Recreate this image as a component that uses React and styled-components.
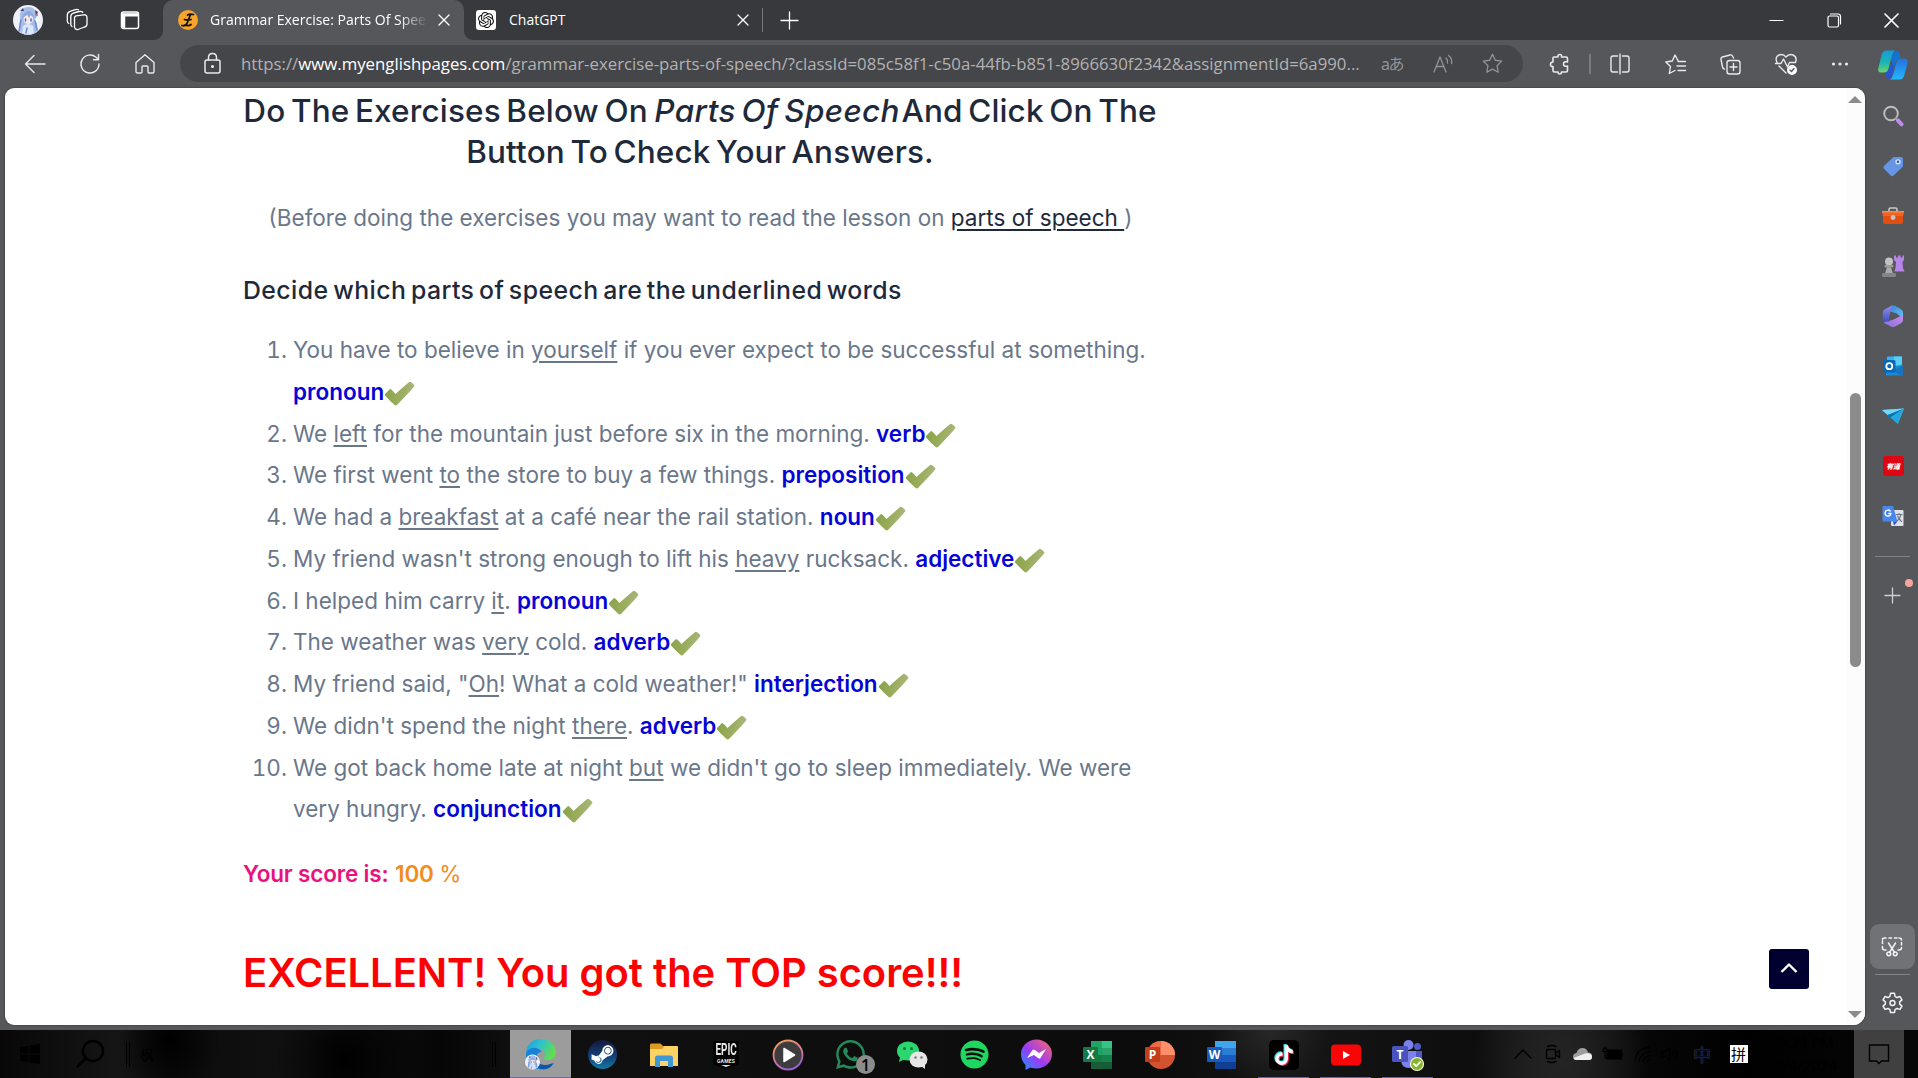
import React from "react";
import styled, { createGlobalStyle } from "styled-components";
import { FaSteamSymbol, FaWhatsapp, FaSpotify, FaTiktok } from "react-icons/fa6";
import { SiOpenai } from "react-icons/si";

const Global = createGlobalStyle`
  * { box-sizing: border-box; }
  html, body { margin: 0; padding: 0; overflow: hidden; background: #56575b; }
  body { font-family: "Open Sans", "Noto Sans", "Noto Sans CJK SC", sans-serif; }
`;

const Screen = styled.div`
  width: 1918px; height: 1078px; display: flex; flex-direction: column;
  background: #56575b; overflow: hidden;
`;

/* ---------- tab strip ---------- */
const TabStrip = styled.header`
  height: 40px; flex: none; display: flex; align-items: stretch; background: #38393c; color: #fff;
`;
const Corner = styled.div`
  width: 163px; display: flex; align-items: center; padding-left: 13px; gap: 23px;
  background: #38393c; border-bottom-right-radius: 9px;
  svg:last-child { margin-left: 9px; }
`;
const CornerWrap = styled.div`background: #56575b; display: flex;`;
const Tab = styled.div`
  width: ${p => p.$w}px; display: flex; align-items: center; padding-left: ${p => p.$pad}px;
  background: ${p => (p.$active ? "#56575b" : "#38393c")};
  border-radius: ${p => (p.$active ? "10px 10px 0 0" : "0 0 0 9px")};
  font-size: 14px; line-height: 20px;
`;
const TabBack = styled.div`display: flex; background: ${p => p.$bg};`;
const TabTitle = styled.div`
  width: ${p => p.$w}px; margin-left: ${p => p.$gap}px; white-space: nowrap; overflow: hidden; color: #fff;
  ${p => p.$fade && "-webkit-mask-image: linear-gradient(90deg,#000 86%,transparent 99%); mask-image: linear-gradient(90deg,#000 86%,transparent 99%);"}
`;
const CloseWrap = styled.div`margin-left: ${p => p.$ml}px; display: flex;`;
const Favicon = styled.div`
  width: 20px; height: 20px; flex: none; display: grid; place-items: center;
  background: #fff; color: #111; border-radius: 3px;
`;
const TabDivider = styled.div`width: 1px; height: 24px; background: #77787b; align-self: center; margin-left: 11px;`;
const NewTab = styled.div`display: grid; place-items: center; margin-left: 18px;`;
const WindowButtons = styled.div`
  margin-left: auto; display: grid; grid-template-columns: repeat(3, 57.5px); place-items: center; width: 172px; margin-right: -2px;
`;

/* ---------- toolbar ---------- */
const Toolbar = styled.div`
  height: 48px; flex: none; display: flex; align-items: center; padding: 0 0 0 7px; color: #e9e9ea;
`;
const NavButtons = styled.div`display: grid; grid-template-columns: repeat(3, 55px); place-items: center; width: 173px; flex: none;`;
const AddressBar = styled.div`
  width: 1343px; flex: none; height: 37px; border-radius: 19px; background: #454649; display: flex; align-items: center;
  padding: 0 20px 0 22px; color: #b2b2b4; margin-top: -1px;
`;
const Url = styled.div`
  margin-left: 18px; width: 1123px; font-size: 16.8px; line-height: 24px; white-space: nowrap;
`;
const Host = styled.span`color: #fff;`;
const AddressActions = styled.div`
  margin-left: auto; width: 122px; display: flex; align-items: center; justify-content: space-between; color: #929395;
`;
const Translate = styled.span`
  font: 16px/20px "Noto Sans", "Noto Sans CJK JP", sans-serif; letter-spacing: -1.5px; white-space: nowrap; width: 22px;
`;
const ToolbarActions = styled.div`display: flex; align-items: center; flex: none; padding-left: 25px;`;
const Action = styled.div`width: ${p => p.$w || 55}px; height: 28px; display: grid; place-items: center;`;
const ToolDivider = styled.div`width: 2px; height: 20px; background: #7a7b7e; margin: 0 1px 0 17px;`;

/* ---------- main ---------- */
const Main = styled.div`height: 942px; flex: none; display: flex;`;
const Page = styled.main`
  width: 1860px; height: 937px; margin-left: 5px; background: #fff; border-radius: 9px 10px 12px 9px;
  display: flex; overflow: hidden; box-shadow: 0 0 2px rgba(0,0,0,.5);
`;
const Article = styled.article`
  width: 914px; margin-left: 238px; padding-top: 2px; flex: none;
  font-family: Inter, "Liberation Sans", sans-serif; font-optical-sizing: none; color: #6a778b;
  font-size: 22.5px; line-height: 41.76px;
`;
const Title = styled.h2`
  margin: 0; font-size: 31.5px; line-height: 41.4px; font-weight: 500; letter-spacing: .15px; word-spacing: -3px;
  color: #1e293b; text-align: center; white-space: nowrap;
  em { letter-spacing: .35px; margin: 0 -4px 0 1px; }
`;
const Intro = styled.p`margin: 24.5px 0 0; text-align: center; white-space: nowrap; padding-left: 1px;`;
const LessonLink = styled.a`color: #1e293b; text-decoration: underline; text-decoration-thickness: 2px; text-underline-offset: 3px; white-space: pre;`;
const Subtitle = styled.h3`
  margin: 35px 0 0; font-size: 24.8px; line-height: 32px; font-weight: 500; letter-spacing: .45px; word-spacing: -2.5px;
  color: #1e293b; white-space: nowrap;
`;
const Questions = styled.ol`
  margin: 23px 0 0; padding: 0 0 0 50px;
  u { text-decoration-thickness: 2px; text-underline-offset: 3px; }
`;
const Question = styled.li`height: ${p => p.$lines * 41.76}px; white-space: nowrap;`;
const Answer = styled.b`font-weight: 600; color: #0404d6;`;
const CheckMark = styled.svg`width: 31px; height: 25px; vertical-align: -6px;`;
const Score = styled.p`
  margin: 23px 0 0; font-weight: 600; color: #e8127f; letter-spacing: -.17px; white-space: nowrap;
`;
const ScoreValue = styled.span`color: #f28c1c; margin-left: 1px;`;
const Percent = styled.span`font-weight: 400;`;
const Verdict = styled.h1`
  margin: 49.5px 0 0; font-size: 39.9px; line-height: 58px; font-weight: 600; color: #fb0202; white-space: nowrap;
`;
const ScrollTop = styled.div`
  width: 40px; height: 40px; margin: auto 37px 36px auto; border-radius: 3px; background: #000030;
  display: grid; place-items: center;
`;
const ScrollTrack = styled.div`
  width: 19px; background: #fcfcfc; display: flex; flex-direction: column; align-items: center; padding: 8px 1px 7px 0;
`;
const Arrow = styled.div`
  width: 0; height: 0; border: 7px solid transparent; border-top-width: 0; border-bottom: 7px solid #8b8b8b;
  transform: ${p => (p.$down ? "rotate(180deg)" : "none")}; margin-top: ${p => (p.$down ? "auto" : 0)};
`;
const Thumb = styled.div`width: 11px; height: 274px; border-radius: 6px; background: #8b8b8b; margin-top: 290px;`;

/* ---------- sidebar ---------- */
const Sidebar = styled.aside`
  width: 53px; display: flex; flex-direction: column; align-items: center; padding: 2.5px 0 0 1px;
`;
const SideItem = styled.div`height: 50px; display: grid; place-items: center; flex: none; padding-left: 2px;`;
const SideLine = styled.div`width: 35px; height: 1px; background: #828386; margin: ${p => p.$m || 0};`;
const AddApp = styled.div`position: relative; width: 52px; height: 40px; display: grid; place-items: center; margin-top: 18px;`;
const NotifyDot = styled.i`position: absolute; right: 5px; top: 4px; width: 8px; height: 8px; border-radius: 50%; background: #f6a49d;`;
const Capture = styled.div`
  width: 45px; height: 45px; border-radius: 9px; background: #717276; display: grid; place-items: center; margin-top: auto; flex: none;
`;
const Settings = styled.div`height: 55px; display: grid; place-items: center; flex: none;`;

/* ---------- taskbar ---------- */
const Taskbar = styled.footer`
  height: 48px; flex: none; display: flex; align-items: stretch; color: #000;
  background:
    radial-gradient(ellipse 60px 60px at 1270px 0, #272727, transparent),
    radial-gradient(ellipse 90px 90px at 1560px 30px, #242424, transparent),
    radial-gradient(ellipse 70px 80px at 345px 30px, #000, transparent),
    radial-gradient(ellipse 50px 60px at 170px 10px, #000, transparent),
    linear-gradient(90deg, #080808, #151515 6%, #0c0c0c 9%, #111 16%, #060606 23%, #101010 27%, #0c0c0c 60%, #151515 68%, #0d0d0d 77%, #1c1c1c 81%, #060606 86%, #000 91%, #070707);
`;
const StartArea = styled.div`width: 510px; display: flex; align-items: center; padding-left: 20px;`;
const SearchGlyph = styled.div`margin-left: 36px; display: flex;`;
const Grip = styled.div`width: 4px; height: 25px; border: solid #000; border-width: 0 1px; margin-left: ${p => p.$ml}px;`;
const ToolbarLabel = styled.span`font: 14px "Noto Sans CJK SC", sans-serif; margin-left: 10px; width: 16px;`;
const TaskItem = styled.div`
  width: ${p => (p.$active ? 61 : 62)}px; display: grid; place-items: center; position: relative;
  background: ${p => (p.$active ? "#9c9c9c" : "transparent")};
  border-bottom: ${p => (p.$active ? "1px solid #6d61c4" : "0")};
  padding-top: 1px;
`;
const RunningLine = styled.i`position: absolute; left: 5px; right: 6px; bottom: 0; height: 1px; background: #6a5fc0;`;
const Badge = styled.span`
  position: absolute; left: 37px; top: 25px; width: 19px; height: 19px; border-radius: 50%; background: #8b8d8c;
  display: grid; place-items: center; font-size: 16px; font-weight: 600; line-height: 1; color: #000;
`;
const Tray = styled.div`margin-left: auto; display: flex; align-items: center;`;
const TrayItem = styled.div`width: ${p => p.$w}px; display: grid; place-items: center; height: 48px;`;
const LangLabel = styled.span`font: 18px/24px "Noto Sans CJK SC", sans-serif; color: #060c24; text-shadow: 0 0 1px #5a6b96;`;
const InputMode = styled.span`
  width: 18px; height: 18px; background: #fff; color: #000; font: 15px/17px "Noto Sans CJK SC", sans-serif; text-align: center;
`;
const Clock = styled.div`width: 96px; text-align: center; font-size: 15px; line-height: 23px; color: #000;`;
const Notifications = styled.div`width: 50px; height: 48px; background: #404040; display: grid; place-items: center; margin-right: 14px;`;

const Ico = styled.svg.attrs(p => ({
  fill: "none", stroke: "currentColor", strokeWidth: p.strokeWidth || 1.5, strokeLinecap: "round", strokeLinejoin: "round",
  viewBox: p.viewBox || "0 0 24 24",
}))`width: ${p => p.$s || 24}px; height: ${p => p.$s || 24}px; display: block; overflow: visible; flex: none;`;

const AvatarArt = () => (
  <g stroke="none">
    <circle cx="15" cy="15" r="15" fill="#eef1f9" />
    <path d="M7 13C6 5 11 2 15.500 2S25 5 23 14L25 25Q21 30 15 30Q9 30 6 25Z" fill="#a7bde8" />
    <path d="M10.500 12Q15 8 20 12L19.500 17Q15 21 11 17Z" fill="#f8e9e8" />
    <path d="M9 14Q10 7 15.500 6Q21 7 21.500 14L18 9.500 16 13 14 9.500Z" fill="#8da8dc" />
    <path d="M10 21Q15 17 20 21L21 28Q15 31 9 28Z" fill="#dbe7f8" />
    <path d="M12.500 14v2M18 14v2" stroke="#3e6fb9" strokeWidth="1.500" />
    <path d="M7 6L10 3 11 6zM22 5L25 7 23 12z" fill="#424b78" />
    <circle cx="24" cy="15" r="2" fill="#fff" /><circle cx="24" cy="10" r="1" fill="#d56b76" />
    <path d="M8 15L6 26M22 16L24 25M14 23L13 28" stroke="#6f8fcb" />
  </g>
);
const Avatar = () => <Ico $s={30} viewBox="0 0 30 30"><AvatarArt /></Ico>;
const Cross = ({ s = 10 }) => <Ico $s={s} viewBox="0 0 10 10" strokeWidth={1.3}><path d="M0 0L10 10M10 0L0 10" /></Ico>;

const Tick = () => (
  <CheckMark viewBox="0 0 31 25">
    <defs><linearGradient id="tick" x1="0" y1="0" x2="1" y2=".2"><stop offset="0" stopColor="#86a04a" /><stop offset=".5" stopColor="#98ab58" /><stop offset="1" stopColor="#a9b67c" /></linearGradient></defs>
    <path d="M1 13L6 8 Q7 7.800 11.500 13 Q18 7 25.500 .8 Q27.500 .8 30.500 4.500 Q30.500 6 13 24 Q11.500 25 10 23.500Q5 19 1 14.500Z" fill="url(#tick)" />
  </CheckMark>
);

const questions = [
  [["You have to believe in ", "yourself", " if you ever expect to be successful at something."], "pronoun", "break"],
  [["We ", "left", " for the mountain just before six in the morning. "], "verb"],
  [["We first went ", "to", " the store to buy a few things. "], "preposition"],
  [["We had a ", "breakfast", " at a café near the rail station. "], "noun"],
  [["My friend wasn't strong enough to lift his ", "heavy", " rucksack. "], "adjective"],
  [["I helped him carry ", "it", ". "], "pronoun"],
  [["The weather was ", "very", " cold. "], "adverb"],
  [["My friend said, \"", "Oh", "! What a cold weather!\" "], "interjection"],
  [["We didn't spend the night ", "there", ". "], "adverb"],
  [["We got back home late at night ", "but", " we didn't go to sleep immediately. We were"], "conjunction", "break", "very hungry. "],
];

/* sidebar pictures */
const SideSearch = () => (
  <Ico $s={22} viewBox="0 0 22 22"><circle cx="9" cy="8.500" r="6.800" stroke="#bdbdbd" strokeWidth="1.900" /><path d="M13.800 13.300l1.500 1.500" stroke="#9b9b9b" strokeWidth="2" /><path d="M16 15.500l3.600 3.800" stroke="#bd8cec" strokeWidth="4" /></Ico>
);
const SideTag = () => (
  <Ico $s={22} viewBox="0 0 22 22"><path d="M11.500 2H19a2 2 0 0 1 2 2v7.500L11.500 20.500a2 2 0 0 1-2.800 0L2 13.800a2 2 0 0 1 0-2.800Z" fill="#6795e6" stroke="none" /><circle cx="16" cy="6.800" r="2" fill="#3d5b98" stroke="#dce8ff" strokeWidth="1.300" /></Ico>
);
const SideToolbox = () => (
  <Ico $s={24} viewBox="0 0 24 24"><path d="M8 7V5.500A1.500 1.500 0 0 1 9.500 4h5A1.500 1.500 0 0 1 16 5.500V7" stroke="#c9c9c9" strokeWidth="1.600" /><g stroke="none"><path d="M1 7.500h22l-1 5H2z" fill="#f0621f" /><path d="M2 12h20v6a2 2 0 0 1-2 2H4a2 2 0 0 1-2-2z" fill="#e04e12" /><rect x="1" y="7" width="22" height="1.500" fill="#f98a4e" /><circle cx="12" cy="13.500" r="2.400" fill="#c9c4c1" /></g></Ico>
);
const SideChess = () => (
  <Ico $s={24} viewBox="0 0 24 24"><g stroke="none"><path d="M13 1.500h2v2h2v-2h2.500v2h2v-2H23V6l-1.500 2 .5 6 1.500 3.500h-10l1-3.500L15 8l-2-2z" fill="#b784e8" /><circle cx="8" cy="7.500" r="4" fill="#c2c2c2" /><rect x="3.500" y="11" width="9" height="2.500" rx="1" fill="#9c9c9c" /><path d="M6 13.500h4l2 6H4z" fill="#acacac" /><rect x="1" y="19" width="14" height="4" rx="1.500" fill="#858585" /></g></Ico>
);
const Side365 = () => (
  <Ico $s={22} viewBox="0 0 22 22">
    <defs>
      <linearGradient id="m1" x1="0" y1="0" x2="1" y2="1"><stop offset="0" stopColor="#3f7fd9" /><stop offset="1" stopColor="#5bc9f7" /></linearGradient>
      <linearGradient id="m2" x1="0" y1="0" x2="0" y2="1"><stop offset="0" stopColor="#8f8df0" /><stop offset="1" stopColor="#3a4fb5" /></linearGradient>
      <linearGradient id="m3" x1="0" y1="1" x2="1" y2="0"><stop offset="0" stopColor="#8b6fe0" /><stop offset="1" stopColor="#c58be6" /></linearGradient>
    </defs>
    <g stroke="none">
      <path d="M9 .8q2-1.200 4 0l6 3.400q2 1.200 2 3.300V13L14.500 8.500 8 6.500Z" fill="url(#m1)" />
      <path d="M10 .5L8.500 7 7 15.500 2 18Q.8 17 .8 15V7.500q0-2 2-3.200Z" fill="url(#m2)" />
      <path d="M1.500 17Q6 17.500 9.500 15L21 10v5q0 2-2 3.200l-6 3.300q-2 1.200-4 0L3 18.500Z" fill="url(#m3)" />
      <path d="M8.500 7l6 1.500 1 4-6 2.800-2.500-1.500Z" fill="#56575b" />
    </g>
  </Ico>
);
const SideOutlook = () => (
  <Ico $s={22} viewBox="0 0 22 22"><g stroke="none"><rect x="5" y="1.500" width="15" height="17" rx="1" fill="#37b3ee" /><path d="M12 1.500h8V9l-8 4Z" fill="#57cdf8" /><path d="M4 12l17-2v9q0 1.500-1.500 1.500H4z" fill="#148bd5" /><path d="M21 10L11 16l8 4.500q2 0 2-1.500Z" fill="#1972bd" /><rect x="1" y="5" width="12.500" height="12.500" rx="1.500" fill="#0868b9" /></g><circle cx="7.300" cy="11.200" r="3" stroke="#fff" strokeWidth="1.800" /></Ico>
);
const SideTelegram = () => (
  <Ico $s={22} viewBox="0 0 22 22"><g stroke="none"><path d="M0 5L22 3.500 16 18.500Z" fill="#3bc1ef" /><path d="M0 5L22 3.500 5.500 10Z" fill="#72d8fa" /><path d="M5.500 10L22 3.500 8 13v4Z" fill="#0b77ad" /><path d="M9 13L22 3.500 16 19Z" fill="#27a5de" /></g></Ico>
);
const RedTile = styled.div`
  width: 21px; height: 20px; border-radius: 3px; background: #df0614; color: #fff; display: grid; place-items: center;
  font: italic 900 7px/10px "Noto Sans CJK SC", sans-serif; letter-spacing: -.3px;
`;
const SideTranslate = () => (
  <Ico $s={22} viewBox="0 0 22 22"><g stroke="none"><rect x="9" y="5" width="12.500" height="16" rx="1" fill="#dfe3e8" /><path d="M1.500 1h9.500l4.500 15.500h-14Q.5 16.500.5 15.500V2Q.5 1 1.500 1Z" fill="#4a87ec" /><path d="M11 16.500h4.500L12 20.500Z" fill="#2b55c4" /></g><path d="M9 8.500H6.800M9 8.500A3 3 0 1 1 8.200 6" stroke="#fff" strokeWidth="1.400" /><path d="M14 9.500h6M17 8.200v1.300M19 9.500q-1 4-4 6.500M15.500 11q1 3 4 5.500" stroke="#6a7480" strokeWidth="1.100" /></Ico>
);

/* taskbar pictures */
const EdgeLogo = () => (
  <Ico $s={32} viewBox="0 0 32 32"><defs><linearGradient id="ed1" x1="0" y1="0" x2="1" y2=".4"><stop offset="0" stopColor="#1a9be0" /><stop offset=".5" stopColor="#2dc3cf" /><stop offset="1" stopColor="#62dd4f" /></linearGradient></defs><g stroke="none">
    <path d="M1 16C1 7 7 1 16 1s15.500 6 15 14c-.5 5-5 7.500-9 7-3-.3-4-1.500-2.500-3C21 16 19 11 12 10 7 10 2 12 1 16Z" fill="url(#ed1)" />
    <path d="M1 17C1 12 6 9 11 10c3 .5 5 2 5.500 4C12 14 10 19 12 23c2 4 5 7 9 7C10 34 1 27 1 17Z" fill="#1683da" />
    <path d="M12.500 17c-2 6 1 10 8 10 4 0 8-2.500 8-1.500-3 5-8 7-13 5.500-6-3-7-9-3-14Z" fill="#0c57a6" /></g>
    <g transform="translate(0 16.500) scale(.5)"><AvatarArt /></g>
  </Ico>
);
const SteamBall = styled.div`
  width: 29px; height: 29px; border-radius: 50%; background: linear-gradient(#15183d, #133f75 55%, #1379a8); color: #fff;
  display: grid; place-items: center; overflow: hidden;
`;
const Folder = () => (
  <Ico $s={30} viewBox="0 0 30 30"><g stroke="none"><path d="M1 5q0-1.500 1.500-1.500h9L14 6h13v5H1Z" fill="#dc9d1e" /><path d="M1 9h12l2.500-3H28q1 0 1 1v19H1Z" fill="#fbd264" /><path d="M6 27V18q0-2.500 2.500-2.500h13Q24 15.500 24 18v9h-5v-6h-8v6Z" fill="#3f97d3" /></g></Ico>
);
const Epic = styled.div`
  width: 26px; height: 28px; background: #030303; color: #e8e8e8; border-radius: 2px; display: flex; flex-direction: column; align-items: center;
  clip-path: polygon(0 0,100% 0,100% 86%,50% 100%,0 86%);
`;
const EpicTop = styled.b`font: 700 15px/17px Roboto, sans-serif; transform: scale(.66,1.1); padding-top: 1px;`;
const EpicBottom = styled.b`
  font: 700 5px/5px Roboto, sans-serif; letter-spacing: .2px;
  &::after { content: ""; display: block; margin: 1px auto 0; border: 5px solid transparent; border-top: 2px solid #ddd; width: 0; border-bottom: 0; }
`;
const MediaPlayer = () => (
  <Ico $s={32} viewBox="0 0 32 32"><defs><linearGradient id="mp" x1="0" y1="0" x2=".4" y2="1"><stop offset="0" stopColor="#f6a14d" /><stop offset=".6" stopColor="#d77c97" /><stop offset="1" stopColor="#9b62cf" /></linearGradient></defs><circle cx="16" cy="16" r="14.500" fill="#3d3d3f" stroke="url(#mp)" strokeWidth="1.800" /><path d="M12 9.500L22.500 16 12 22.500Z" fill="#fff" stroke="#fff" /></Ico>
);
const WeChat = () => (
  <Ico $s={32} viewBox="0 0 32 32"><g stroke="none"><ellipse cx="12" cy="12" rx="11" ry="9.500" fill="#2bd66e" /><path d="M4 18l-1 5 6-3Z" fill="#2bd66e" /><circle cx="8.500" cy="9.500" r="1.500" fill="#10753a" /><circle cx="15.500" cy="9.500" r="1.500" fill="#10753a" /><ellipse cx="22.500" cy="20.500" rx="9" ry="8" fill="#e6e6e6" /><path d="M25 27l4 3 0-6Z" fill="#e6e6e6" /><circle cx="19.500" cy="18.500" r="1.200" fill="#777" /><circle cx="25.500" cy="18.500" r="1.200" fill="#777" /></g></Ico>
);
const MessengerGlyph = () => (
  <Ico $s={31} viewBox="0 0 31 31"><defs><linearGradient id="ms" x1="0" y1="1" x2="1" y2="0"><stop offset="0" stopColor="#1795ff" /><stop offset=".45" stopColor="#9a3af5" /><stop offset="1" stopColor="#ff6968" /></linearGradient></defs><g stroke="none"><path d="M15.500.5C24 .5 31 7 31 15s-7 14.500-15.500 14.500q-4 0-6-1L4.500 31V26Q0 21.500 0 15C0 7 7 .5 15.500.5Z" fill="url(#ms)" /><path d="M6 19l5.500-8q1-1 2.500 0l4 3L25 10l-5.500 9q-1 1-2.500 0l-4-3Z" fill="#fff" /></g></Ico>
);
const OfficeLetter = styled.text`font: 700 12px "Open Sans", sans-serif; fill: #fff; stroke: none; text-anchor: middle;`;
const Excel = () => (
  <Ico $s={30} viewBox="0 0 30 30"><g stroke="none"><rect x="8" y="1" width="21" height="28" rx="1" fill="#1e7145" /><path d="M8 1h10.500v14H8z" fill="#21a366" /><path d="M18.500 1H29v7H18.500z" fill="#33c481" /><path d="M18.500 8H29v7H18.500z" fill="#2ba36b" /><path d="M8 15h10.500v7H8z" fill="#107c41" /><path d="M18.500 15H29v7H18.500z" fill="#15814c" /><path d="M8 22h21v7H8z" fill="#185c37" /><rect x="0" y="7" width="15" height="15" rx="1" fill="#127a42" /></g><OfficeLetter x="7.500" y="19">X</OfficeLetter></Ico>
);
const PowerPoint = () => (
  <Ico $s={30} viewBox="0 0 30 30"><g stroke="none"><circle cx="16" cy="15" r="14" fill="#d35230" /><path d="M16 1a14 14 0 0 1 14 14H16Z" fill="#ff8f6b" /><path d="M16 1A14 14 0 0 0 2 15h14Z" fill="#ed6c47" /><rect x="0" y="7" width="15" height="15" rx="1" fill="#c43e1c" /></g><OfficeLetter x="7.500" y="19">P</OfficeLetter></Ico>
);
const Word = () => (
  <Ico $s={30} viewBox="0 0 30 30"><g stroke="none"><rect x="8" y="1" width="21" height="28" rx="1" fill="#103f91" /><path d="M8 1h21v7H8z" fill="#41a5ee" /><path d="M8 8h21v7H8z" fill="#2b7cd3" /><path d="M8 15h21v7H8z" fill="#185abd" /><rect x="0" y="7" width="15" height="15" rx="1" fill="#185abd" /></g><OfficeLetter x="7.500" y="19">W</OfficeLetter></Ico>
);
const TikTile = styled.div`
  width: 30px; height: 30px; border-radius: 5px; background: #000; display: grid; place-items: center; color: #fff;
  svg { filter: drop-shadow(-1px -1px 0 #25e0dc) drop-shadow(1px 1px 0 #ee2b57); }
`;
const YouTube = () => (
  <Ico $s={30} viewBox="0 0 30 30"><g stroke="none"><rect x="0" y="4.500" width="30" height="21" rx="4" fill="#fa0505" /><path d="M12 11L19 15 12 19Z" fill="#fff" /></g></Ico>
);
const Teams = () => (
  <Ico $s={32} viewBox="0 0 32 32"><g stroke="none"><circle cx="16.500" cy="6" r="5" fill="#7b83eb" /><circle cx="25.500" cy="7.500" r="3.500" fill="#5059c9" /><path d="M20 12h10v9q-1 6-7 5Z" fill="#5059c9" /><path d="M9 12h15v10q-1 7-7.500 7T9 22Z" fill="#7b83eb" /><rect x="0" y="7" width="16" height="16" rx="1.500" fill="#4b53bc" /><circle cx="25" cy="25" r="6.500" fill="#87b52a" stroke="#f1f7df" strokeWidth="1.200" /></g><OfficeLetter x="8" y="19.500">T</OfficeLetter><path d="M22 25l2.200 2.200 4-4.200" stroke="#fff" strokeWidth="1.800" /></Ico>
);

function Browser() {
  return (
    <>
      <TabStrip>
        <CornerWrap><Corner>
          <Avatar />
          <Ico $s={22} viewBox="0 0 22 22" strokeWidth={1.3}>
            <path d="M10 6.800L17.500 5.800Q20.800 5.500 21 8.500V15q0 2.500-2.500 3L12 20.500Q9 21 8.500 18V9Q8.500 7.200 10 6.800Z" />
            <path d="M6 17.500Q4.800 17 4.800 15V7.500Q4.800 5 7.500 4L13 2.500Q15.500 2 16.800 3.300" />
            <path d="M2.800 14.500Q1.300 14 1.300 12V6Q1.300 3.500 4 2.300L8.500 .8Q11 0 12.500 .8" />
          </Ico>
          <Ico $s={20} viewBox="0 0 20 20" strokeWidth={1.500}><rect x="1.500" y="2" width="17" height="16.500" rx="2" /><path d="M2 3.200h16v3H2zM2 6h3v12H4Q2 18 2 16z" fill="currentColor" strokeWidth=".5" /></Ico>
        </Corner></CornerWrap>
        <TabBack $bg="#38393c"><Tab $w={301} $pad={15} $active>
          <Ico $s={20} viewBox="0 0 20 20"><circle cx="10" cy="10" r="10" fill="#f6a52a" stroke="none" /><path d="M15.500 4.500Q12 3.500 9.500 5M12.500 4.500L9 13.500Q7.500 16.500 4 15.500M6.500 9.500q3 1 6.500 0M7 15q4 1.500 6-.5" stroke="#17130c" strokeWidth="1.800" /></Ico>
          <TabTitle $w={220} $gap={12} $fade>Grammar Exercise: Parts Of Speech</TabTitle>
          <CloseWrap $ml={9}><Cross /></CloseWrap>
        </Tab></TabBack>
        <TabBack $bg="#56575b"><Tab $w={287} $pad={12}>
          <Favicon><SiOpenai size={16} /></Favicon>
          <TabTitle $w={216} $gap={13}>ChatGPT</TabTitle>
          <CloseWrap $ml={13}><Cross /></CloseWrap>
        </Tab></TabBack>
        <TabDivider />
        <NewTab><Ico $s={17} viewBox="0 0 17 17" strokeWidth={1.3}><path d="M8.500 0v17M0 8.500h17" /></Ico></NewTab>
        <WindowButtons>
          <Ico $s={13} viewBox="0 0 13 13" strokeWidth={1.2}><path d="M0 6.500h13" /></Ico>
          <Ico $s={13} viewBox="0 0 13 13" strokeWidth={1.2}><rect x="0" y="2" width="10.500" height="11" rx="1.500" /><path d="M2.500 0H10q2.500 0 2.500 2.500V10" /></Ico>
          <Cross s={13} />
        </WindowButtons>
      </TabStrip>
      <Toolbar>
        <NavButtons>
          <Ico $s={20} viewBox="0 0 20 20" strokeWidth={1.4}><path d="M20 10H.5M9 1.500L.5 10 9 18.500" /></Ico>
          <Ico $s={20} viewBox="0 0 20 20" strokeWidth={1.4}><path d="M19 10A9 9 0 1 1 16 3.300L18.500 5.500M18.500.500V5.700H13.500" /></Ico>
          <Ico $s={20} viewBox="0 0 20 20" strokeWidth={1.4}><path d="M1 8.500L10 .8 19 8.500V17.500q0 1.500-1.500 1.500H14q-1 0-1-1v-5q0-1-1-1H8q-1 0-1 1v5q0 1-1 1H2.500Q1 19 1 17.500Z" /></Ico>
        </NavButtons>
        <AddressBar>
          <Ico $s={21} viewBox="0 0 21 21" strokeWidth={1.5} color="#e9e9ea"><rect x="3" y="7" width="15" height="13" rx="2" /><path d="M6.500 7V4.500q0-4 4-4t4 4V7" /><circle cx="10.500" cy="13.500" r=".8" fill="currentColor" /></Ico>
          <Url>https://<Host>www.myenglishpages.com</Host>/grammar-exercise-parts-of-speech/?classId=085c58f1-c50a-44fb-b851-8966630f2342&amp;assignmentId=6a990...</Url>
          <AddressActions>
            <Translate>aあ</Translate>
            <Ico $s={20} viewBox="0 0 20 20" strokeWidth={1.3}><path d="M1 18L7 3l6 15M3.200 12.500h7.600M13 4q2 2 1.500 5M15.500 1.500q4 3 3 8" /></Ico>
            <Ico $s={21} viewBox="0 0 24 24" strokeWidth={1.5}><path d="M12 1.500l3.200 6.800 7.300 1-5.300 5.200 1.300 7.500L12 18.400 5.500 22l1.300-7.500L1.500 9.300l7.300-1z" /></Ico>
          </AddressActions>
        </AddressBar>
        <ToolbarActions>
          <Action $w={24}><Ico $s={20} viewBox="0 0 20 20" strokeWidth={1.6}><path d="M4 3h4q-.5-2.500 1.800-2.500T11.500 3H16q1.500 0 1.500 1.500V8q-4-1-4 2t4 2v4.500q0 1.500-1.500 1.500h-4.500q0 2-1.700 2T8 18H4.500Q3 18 3 16.500V12.500Q.5 13 .5 10.500T3 8V4Q3 3 4 3Z" /></Ico></Action>
          <ToolDivider />
          <Action><Ico $s={20} viewBox="0 0 20 20" strokeWidth={1.4}><path d="M7.500 2H3Q1 2 1 4v12q0 2 2 2h4.500M12.500 2H17q2 0 2 2v12q0 2-2 2h-4.500M10 0v20" /></Ico></Action>
          <Action $w={56}><Ico $s={21} viewBox="0 0 21 21" strokeWidth={1.4}><path d="M13 6.500L10 1 7.300 7 .8 8l4.700 4.500L4.300 19.500 10 16.500M13 7.500h7.500M12 12h8.500M13 16.500h7.500" /></Ico></Action>
          <Action $w={55}><Ico $s={21} viewBox="0 0 21 21" strokeWidth={1.4}><rect x="7" y="6.500" width="13" height="13.500" rx="2.500" /><path d="M13.500 9.500v7M10 13h7M4.500 15Q3 15 2.500 13L1 5.500Q.7 3.500 2.500 3L10 1q2-.5 2.800 1.500L13.500 4" /></Ico></Action>
          <Action $w={55}><Ico $s={22} viewBox="0 0 22 22" strokeWidth={1.4}><path d="M2 9.500Q-.5 4 4 2q4-1.500 7 2 3-3.500 7-2 4.500 2 2.500 7.500M4 13l7 7M.5 10.500H6L8.500 6l4 8 2-4.500H20" /><circle cx="17" cy="17" r="4.300" fill="#fff" stroke="#fff" /><path d="M15 17l1.500 1.500 2.500-3" stroke="#56575b" /></Ico></Action>
          <Action $w={54}><Ico $s={18} viewBox="0 0 18 18"><g fill="currentColor" stroke="none"><circle cx="2.500" cy="9" r="1.600" /><circle cx="9" cy="9" r="1.600" /><circle cx="15.500" cy="9" r="1.600" /></g></Ico></Action>
          <Action $w={52}><Ico $s={30} viewBox="0 0 30 30"><defs><linearGradient id="cp1" x1="0" y1="0" x2="0" y2="1"><stop offset="0" stopColor="#159bdc" /><stop offset=".55" stopColor="#1cb5b0" /><stop offset="1" stopColor="#6bd86b" /></linearGradient><linearGradient id="cp2" x1="0" y1="0" x2="0" y2="1"><stop offset="0" stopColor="#2470de" /><stop offset="1" stopColor="#22b7fb" /></linearGradient></defs><g stroke="none"><path d="M8 1h11q2 0 2.500 3l1 4.500q-4 0-5 4L16 18 14 12Z" fill="#1473cf" /><path d="M12 29q-3 0-4-3l-1-3.500q3 0 4-4L14 12l2 6-2 8Q13.500 28 12 29Z" fill="#2457cf" /><path d="M8.500.5H17q-2 1-3 4.500L10.500 18.500Q9.500 22.500 6 22.500H3Q-.5 22.500.3 18L4 4Q5 .5 8.500.5Z" fill="url(#cp1)" /><path d="M21.500 29.500H12q2-1 3-4.500L18.500 12q1-3.500 4-3.500H26q4.500 0 3.500 4.500L26 26q-1 3.500-4.500 3.500Z" fill="url(#cp2)" /></g></Ico></Action>
        </ToolbarActions>
      </Toolbar>
    </>
  );
}

export default function App() {
  return (
    <Screen>
      <Global />
      <Browser />
      <Main>
        <Page>
          <Article>
            <Title>Do The Exercises Below On <em>Parts Of Speech</em> And Click On The<br />Button To Check Your Answers.</Title>
            <Intro>(Before doing the exercises you may want to read the lesson on <LessonLink>parts of speech </LessonLink>)</Intro>
            <Subtitle>Decide which parts of speech are the underlined words</Subtitle>
            <Questions>
              {questions.map(([t, answer, br, rest], i) => (
                <Question key={i} $lines={br ? 2 : 1}>
                  {t[0]}<u>{t[1]}</u>{t[2]}{br && <br />}{rest}<Answer>{answer}</Answer><Tick />
                </Question>
              ))}
            </Questions>
            <Score>Your score is: <ScoreValue>100 <Percent>%</Percent></ScoreValue></Score>
            <Verdict>EXCELLENT! You got the TOP score!!!</Verdict>
          </Article>
          <ScrollTop><Ico $s={18} viewBox="0 0 18 18" color="#fff" strokeWidth={2.4}><path d="M1.500 12L9 4.500 16.500 12" strokeLinecap="butt" /></Ico></ScrollTop>
          <ScrollTrack><Arrow /><Thumb /><Arrow $down /></ScrollTrack>
        </Page>
        <Sidebar>
          <SideItem><SideSearch /></SideItem>
          <SideItem><SideTag /></SideItem>
          <SideItem><SideToolbox /></SideItem>
          <SideItem><SideChess /></SideItem>
          <SideItem><Side365 /></SideItem>
          <SideItem><SideOutlook /></SideItem>
          <SideItem><SideTelegram /></SideItem>
          <SideItem><RedTile>有道</RedTile></SideItem>
          <SideItem><SideTranslate /></SideItem>
          <SideLine $m="15.5px 0 0" />
          <AddApp><Ico $s={15} viewBox="0 0 15 15" color="#cfcfd0" strokeWidth={1.3}><path d="M7.500 0v15M0 7.500h15" /></Ico><NotifyDot /></AddApp>
          <Capture><Ico $s={20} viewBox="0 0 20 20" color="#f2f2f2" strokeWidth={1.5}>
            <path d="M4 13H2.500Q.5 13 .5 11V9.500M.5 6.500V4M.5 2.500Q.5 1 2.500 1H4M7 1h2.500M12.500 1H15M17 1q2.500 0 2.500 2M19.500 5.500V8M19.500 10.500q0 2.500-2.500 2.500h-1" /><path d="M6.500 6l6 9.500M13.500 6l-6 9.500" /><circle cx="6.800" cy="16.800" r="1.900" /><circle cx="13.200" cy="16.800" r="1.900" />
          </Ico></Capture>
          <SideLine $m="5px 0 0" />
          <Settings><Ico $s={21} viewBox="0 0 24 24" color="#f2f2f2" strokeWidth={1.7}><path d="M9.800 1.500h4.400l.7 3.400 2.300 1.400 3.400-1.100 2.200 3.800-2.600 2.300v2.500l2.600 2.300-2.200 3.800-3.400-1.100-2.300 1.400-.7 3.300H9.800l-.7-3.300-2.300-1.400-3.400 1.100-2.200-3.800 2.600-2.300v-2.500L1.200 9l2.200-3.800 3.400 1.100 2.300-1.400z" /><circle cx="12" cy="12.500" r="2.800" /></Ico></Settings>
        </Sidebar>
      </Main>
      <Taskbar>
        <StartArea>
          <Ico $s={20} viewBox="0 0 20 20"><path d="M0 3l8.500-1.200V9.500H0zM9.500 1.600L20 0v9.500H9.500zM0 10.500h8.500v7.700L0 17zM9.500 10.500H20V20L9.500 18.400z" fill="#000" stroke="none" /></Ico>
          <SearchGlyph><Ico $s={28} viewBox="0 0 28 28" strokeWidth={2.6}><circle cx="17" cy="11" r="10" /><path d="M9.500 18.500L1.500 26.500" /></Ico></SearchGlyph>
          <Grip $ml={22} /><ToolbarLabel>枫</ToolbarLabel><Grip $ml={336} />
        </StartArea>
        <TaskItem $active><EdgeLogo /></TaskItem>
        <TaskItem><SteamBall><FaSteamSymbol size={25} /></SteamBall></TaskItem>
        <TaskItem><Folder /></TaskItem>
        <TaskItem><Epic><EpicTop>EPIC</EpicTop><EpicBottom>GAMES</EpicBottom></Epic></TaskItem>
        <TaskItem><MediaPlayer /></TaskItem>
        <TaskItem><FaWhatsapp size={33} color="#25895a" /><Badge>1</Badge></TaskItem>
        <TaskItem><WeChat /></TaskItem>
        <TaskItem><FaSpotify size={29} color="#1ed760" /></TaskItem>
        <TaskItem><MessengerGlyph /></TaskItem>
        <TaskItem><Excel /></TaskItem>
        <TaskItem><PowerPoint /></TaskItem>
        <TaskItem><Word /></TaskItem>
        <TaskItem><TikTile><FaTiktok size={20} /></TikTile><RunningLine /></TaskItem>
        <TaskItem><YouTube /><RunningLine /></TaskItem>
        <TaskItem><Teams /><RunningLine /></TaskItem>
        <Tray>
          <TrayItem $w={31}><Ico $s={16} viewBox="0 0 16 16" strokeWidth={1.4}><path d="M0 12l8-8 8 8" /></Ico></TrayItem>
          <TrayItem $w={30}><Ico $s={18} viewBox="0 0 18 18" strokeWidth={1.4}><rect x="2.500" y="4.500" width="9" height="9" rx="1" /><path d="M12 8l3.500-2.500v7L12 10M3.500 1.500Q8 -.5 12 1.500M3.500 16.500q4.500 2 8.500 0" /></Ico></TrayItem>
          <TrayItem $w={29}><Ico $s={19} viewBox="0 0 19 19"><g stroke="none"><path d="M4 15Q0 15 0 11.500 0 8.500 3.500 8 5 3 9.500 3T15 7.500q4 0 4 4T15 15Z" fill="#9d9d9d" /><path d="M3 15Q1 15 .5 13L12 8.500q7-1 7 3.500 0 3-3.500 3Z" fill="#f0f0f0" /></g></Ico></TrayItem>
          <TrayItem $w={31}><Ico $s={20} viewBox="0 0 20 20" strokeWidth={1.2}><rect x="4" y="6" width="14.500" height="9" fill="#000" /><path d="M19.500 9v3M0 5h4v2.500H0zM2 8v6h2M1 3v2M3 3v2" /></Ico></TrayItem>
          <TrayItem $w={29}><Ico $s={17} viewBox="0 0 17 17" strokeWidth={1.3}><path d="M1 15Q2 3 15 1.500M5 15.500Q6 7 15.500 5.500M9 15.500Q10 10.500 15.500 9.500M13 15.500q.5-2 2.500-2.200" /></Ico></TrayItem>
          <TrayItem $w={28}><Ico $s={18} viewBox="0 0 18 18" strokeWidth={1.3}><path d="M0 6.500h3.500L8 3v12l-4.500-3.500H0zM11 7q1.500 2 0 4M13.500 5q3 4 0 8" /></Ico></TrayItem>
          <TrayItem $w={34}><LangLabel>中</LangLabel></TrayItem>
          <TrayItem $w={39}><InputMode>拼</InputMode></TrayItem>
          <Clock>9:24 PM<br />6/4/2024</Clock>
          <Notifications><Ico $s={20} viewBox="0 0 20 20" strokeWidth={1.4}><path d="M.5 1h19v16H12.500L10 19.500 7.500 17H.5z" strokeLinejoin="miter" /></Ico></Notifications>
        </Tray>
      </Taskbar>
    </Screen>
  );
}
